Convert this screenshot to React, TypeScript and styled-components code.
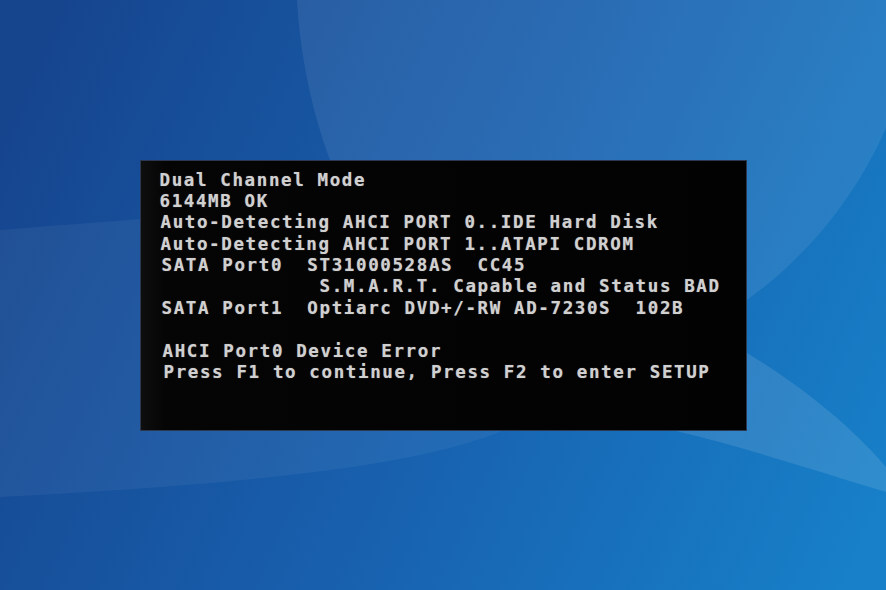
import React from "react";
import styled, {createGlobalStyle} from "styled-components";

const GlobalStyle = createGlobalStyle`
  html, body {
    margin: 0;
    padding: 0;
    background: #174a96;
    overflow: hidden;
  }
`;

const Page = styled.div`
  position: relative;
  width: 886px;
  height: 590px;
  overflow: hidden;
  display: flex;
  align-items: center;
  justify-content: center;
`;

const Wallpaper = styled.svg`
  position: absolute;
  inset: 0;
  width: 100%;
  height: 100%;
`;

const Screen = styled.div`
  position: relative;
  z-index: 1;
  box-sizing: border-box;
  width: 607px;
  height: 271px;
  padding: 9px 0 0 19px;
  border: 1px solid #2b3950;
  background: linear-gradient(90deg, #0e0e0e 0, #050505 4%, #030303 60%, #020202 100%);
  display: flex;
  flex-direction: column;
`;

const Line = styled.div<{$shift: number}>`
  height: 21.4px;
  line-height: 21.4px;
  padding-left: ${(p) => p.$shift}px;
  white-space: pre;
  font-family: "DejaVu Sans Mono", "Liberation Mono", monospace;
  font-weight: bold;
  font-size: 17.5px;
  letter-spacing: 1.62px;
  color: #d0d0d0;
  text-shadow: 0 0 1px rgba(255, 255, 255, 0.45);
`;

const lines: [string, number][] = [
  ["Dual Channel Mode", 0],
  ["6144MB OK", 0],
  ["Auto-Detecting AHCI PORT 0..IDE Hard Disk", 1],
  ["Auto-Detecting AHCI PORT 1..ATAPI CDROM", 1],
  ["SATA Port0  ST31000528AS  CC45", 2],
  ["             S.M.A.R.T. Capable and Status BAD", 2],
  ["SATA Port1  Optiarc DVD+/-RW AD-7230S  102B", 2],
  [" ", 0],
  ["AHCI Port0 Device Error", 3],
  ["Press F1 to continue, Press F2 to enter SETUP", 4],
];

export default function App() {
  return (
    <>
      <GlobalStyle />
      <Page>
        <Wallpaper viewBox="0 0 886 590" preserveAspectRatio="none">
          <defs>
            <linearGradient id="base" gradientUnits="userSpaceOnUse" x1="0" y1="100" x2="886" y2="500">
              <stop offset="0" stopColor="#16448d" />
              <stop offset="0.55" stopColor="#1862b0" />
              <stop offset="1" stopColor="#1780c8" />
            </linearGradient>
          </defs>
          <rect width="886" height="590" fill="url(#base)" />
          {/* big disc, upper right */}
          <path
            d="M297,0 C300,55 312,112 330,160 C380,290 560,340 680,325 C712,320 735,308 747,300 C800,262 852,205 886,128 L886,0 Z"
            fill="#ffffff"
            fillOpacity="0.08"
          />
          {/* wide lens, left */}
          <path
            d="M0,230 C50,226 100,222 140,219 C300,260 460,360 500,432 C420,462 300,481 0,497 Z"
            fill="#ffffff"
            fillOpacity="0.05"
          />
          {/* crescent, lower right */}
          <path
            d="M747,353 C800,385 850,425 886,467 L886,492 C820,472 740,446 680,432 C640,420 620,400 600,380 C660,370 710,360 747,353 Z"
            fill="#ffffff"
            fillOpacity="0.11"
          />
        </Wallpaper>
        <Screen>
          {lines.map(([text, shift], i) => (
            <Line key={i} $shift={shift}>
              {text}
            </Line>
          ))}
        </Screen>
      </Page>
    </>
  );
}
